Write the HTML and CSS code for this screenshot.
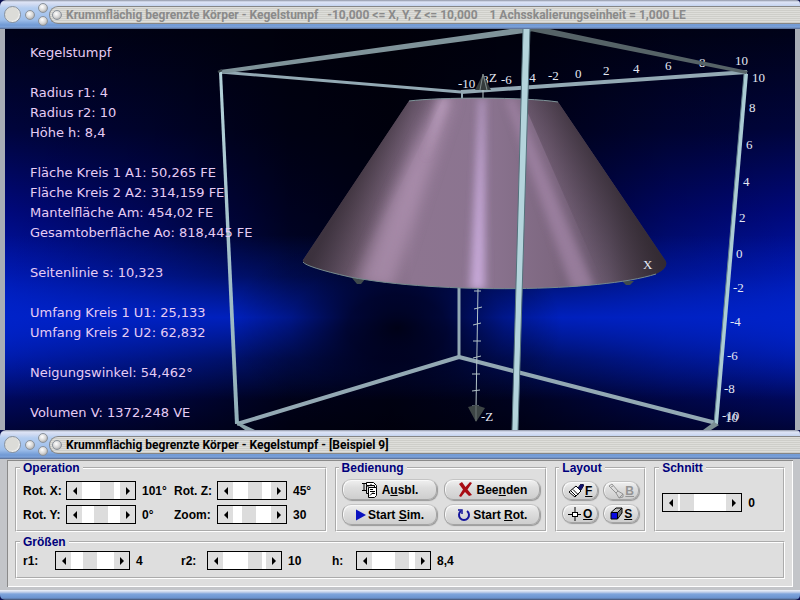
FILE: index.html
```html
<!DOCTYPE html>
<html lang="de">
<head>
  <meta charset="UTF-8">
  <meta name="viewport" content="width=device-width, initial-scale=1.0">
  <title>Krummflächig begrenzte Körper - Kegelstumpf</title>
  <link rel="stylesheet" href="styles.css">
</head>
<body>
  <section class="window">
    <header class="titlebar inactive">
      <button class="ball large" aria-label="Menü"></button>
      <button class="ball" aria-label="Minimieren"></button>
      <div class="ball-stack">
        <button class="ball" aria-label="Maximieren"></button>
        <button class="ball" aria-label="Wiederherstellen"></button>
      </div>
      <div class="caption">
        <button class="ball" aria-label="Schließen"></button>
        <h1>Krummflächig begrenzte Körper - Kegelstumpf   -10,000 &lt;= X, Y, Z &lt;= 10,000    1 Achsskalierungseinheit = 1,000 LE</h1>
      </div>
    </header>

    <div class="scene">
      <svg class="view" viewBox="5 29 790 401">
        <defs>
          <linearGradient id="sky" x1="0" y1="0" x2="0" y2="1">
            <stop offset="0" stop-color="#000218"/>
            <stop offset="0.25" stop-color="#00043c"/>
            <stop offset="0.45" stop-color="#00087a"/>
            <stop offset="0.6" stop-color="#0014a4"/>
            <stop offset="0.72" stop-color="#0024cc"/>
            <stop offset="0.82" stop-color="#0018a0"/>
            <stop offset="0.92" stop-color="#00085c"/>
            <stop offset="1" stop-color="#000438"/>
          </linearGradient>
          <linearGradient id="shade" x1="0" y1="0" x2="1" y2="0">
            <stop offset="0" stop-color="#000008" stop-opacity="0"/>
            <stop offset="0.18" stop-color="#000008" stop-opacity="0.35"/>
            <stop offset="0.36" stop-color="#000008" stop-opacity="0.8"/>
            <stop offset="0.49" stop-color="#000008" stop-opacity="0.92"/>
            <stop offset="0.66" stop-color="#000008" stop-opacity="0.7"/>
            <stop offset="0.84" stop-color="#000008" stop-opacity="0.25"/>
            <stop offset="1" stop-color="#000008" stop-opacity="0"/>
          </linearGradient>
          <linearGradient id="band" x1="0" y1="0" x2="0" y2="1">
            <stop offset="0" stop-color="#0022c8" stop-opacity="0"/>
            <stop offset="0.25" stop-color="#0022c8" stop-opacity="0.3"/>
            <stop offset="0.5" stop-color="#0022c8" stop-opacity="0.9"/>
            <stop offset="0.75" stop-color="#0022c8" stop-opacity="0.3"/>
            <stop offset="1" stop-color="#0022c8" stop-opacity="0"/>
          </linearGradient>
          <radialGradient id="pit">
            <stop offset="0" stop-color="#000010" stop-opacity="0.95"/>
            <stop offset="0.3" stop-color="#000018" stop-opacity="0.8"/>
            <stop offset="0.65" stop-color="#000018" stop-opacity="0.3"/>
            <stop offset="1" stop-color="#000018" stop-opacity="0"/>
          </radialGradient>
          <linearGradient id="cone" gradientUnits="userSpaceOnUse" x1="302" y1="0" x2="668" y2="0">
            <stop offset="0" stop-color="#54475a"/>
            <stop offset="0.14" stop-color="#6e5b6e"/>
            <stop offset="0.3" stop-color="#8d7590"/>
            <stop offset="0.5" stop-color="#8b7490"/>
            <stop offset="0.68" stop-color="#7e6881"/>
            <stop offset="0.84" stop-color="#66566a"/>
            <stop offset="1" stop-color="#40363e"/>
          </linearGradient>
          <linearGradient id="edgeLeft" gradientUnits="userSpaceOnUse" x1="355" y1="180" x2="395" y2="202">
            <stop offset="0" stop-color="#2c242c" stop-opacity="0.65"/>
            <stop offset="1" stop-color="#2c242c" stop-opacity="0"/>
          </linearGradient>
          <linearGradient id="edgeRight" gradientUnits="userSpaceOnUse" x1="612" y1="182" x2="560" y2="214">
            <stop offset="0" stop-color="#2c242c" stop-opacity="0.7"/>
            <stop offset="1" stop-color="#2c242c" stop-opacity="0"/>
          </linearGradient>
          <linearGradient id="rod" x1="0" y1="0" x2="0" y2="1">
            <stop offset="0" stop-color="#b4d2da"/>
            <stop offset="1" stop-color="#93b0ba"/>
          </linearGradient>
          <clipPath id="body">
            <path d="M409 101 C440 97 525 97 558 102 L665 260 Q670 267 656 274 C600 292 440 294 350 277 Q300 266 303 260 Z"/>
          </clipPath>
          <filter id="soft" x="-50%" y="-20%" width="200%" height="140%">
            <feGaussianBlur stdDeviation="7"/>
          </filter>
          <filter id="softer" x="-100%" y="-20%" width="300%" height="140%">
            <feGaussianBlur stdDeviation="4"/>
          </filter>
        </defs>

        <rect x="5" y="29" width="790" height="401" fill="url(#sky)"/>
        <rect x="5" y="29" width="790" height="401" fill="url(#shade)"/>
        <rect x="5" y="235" width="790" height="165" fill="url(#band)"/>
        <ellipse cx="397" cy="328" rx="165" ry="110" fill="url(#pit)"/>

        <!-- axis numbers that lie behind the frame -->
        <g class="axis">
          <text x="482" y="84">8</text>
          <text x="525" y="82">-4</text>
          <text x="699" y="67">8</text>
        </g>

        <!-- back edges of the cube -->
        <g class="frame">
          <path d="M220 72 L461 92" stroke-width="3"/>
          <path d="M461 92 L747 72" stroke-width="4"/>
          <path d="M462 92 V100" stroke-width="2"/>
          <path d="M459 285 V357" stroke-width="3"/>
          <path d="M459 357 L237 424" stroke-width="4"/>
          <path d="M459 357 L716 423" stroke-width="4"/>
        </g>

        <!-- z axis -->
        <g class="zaxis">
          <path d="M483 88 V100"/>
          <path d="M478 288 L476 408 M474 291 h7 M474 309 l8 -2 M473 325 l8 -2 M473 341 h8 M473 358 l8 -2 M472 374 h8 M472 391 l8 -1 M472 406 h7"/>
        </g>
        <path d="M483 74 L475 90 H491 Z" fill="#343b3b"/>
        <path d="M483 74 L480 90 M483 74 L487 90" stroke="#808c8c" stroke-width="1"/>
        <path d="M468 407 L476 405 L485 408 L476 422 Z" fill="#3d4545"/>
        <path d="M476 406 L476 421" stroke="#6a7575" stroke-width="1"/>

        <!-- truncated cone -->
        <path d="M352 278 h14 l-5 6 h-4 Z M622 281 h12 l-4 4 h-4 Z" fill="#3f4a4c"/>
        <g clip-path="url(#body)">
          <rect x="300" y="95" width="370" height="200" fill="url(#cone)"/>
          <path d="M405 95 L300 265 L345 300 L445 95 Z" fill="url(#edgeLeft)"/>
          <path d="M563 95 L675 265 L610 300 L520 95 Z" fill="url(#edgeRight)"/>
          <path d="M440 98 L454 98 L424 190 L392 290 L356 285 L392 200 Z" fill="#b294b4" opacity="0.7" filter="url(#soft)"/>
          <path d="M480 98 L484 98 L485 290 L470 290 Z" fill="#cdafe0" opacity="0.9" filter="url(#softer)"/>
          <path d="M505 98 L514 98 L596 290 L572 290 Z" fill="#a688aa" opacity="0.7" filter="url(#softer)"/>
          <path d="M440 98 L449 98 L425 160 Z" fill="#c4a8c8" opacity="0.7" filter="url(#softer)"/>
        </g>
        <path d="M409 101 C440 97 525 97 558 102" fill="none" stroke="#7d9498" stroke-width="1"/>
        <path d="M303 262 Q306 267 350 277 C440 294 600 292 656 274" fill="none" stroke="#758a8e" stroke-width="1"/>

        <!-- front edges of the cube -->
        <path d="M220 70 L510 29 L540 29 L524 33 L220 74 Z" fill="#7f939a"/>
        <path d="M530 29 L550 29 L748 71 L746 74 L530 31 Z" fill="#566367"/>
        <path d="M219 72 L222 72 L239 424 L235 424 Z" fill="url(#rod)"/>
        <path d="M744 74 L748 74 L718 424 L714 424 Z" fill="#abccd4"/>
        <path d="M744 74 L714 424" stroke="#63808a" stroke-width="1"/>
        <path d="M523 29 L530 29 L518 430 L512 430 Z" fill="#b4d4dc"/>
        <path d="M523 29 L512 430 M530 29 L518 430" stroke="#54717b" stroke-width="1"/>
        <path d="M235 423 L240 423 L255 430 L245 430 Z" fill="#8ba3aa"/>
        <path d="M714 422 L719 425 L711 430 L703 430 Z" fill="#7c8f94"/>
        <path d="M218 72 L222 70" stroke="#3c484c" stroke-width="2"/>

        <g class="axis">
          <text x="458" y="88">-10</text>
          <text x="489" y="82">Z</text>
          <text x="501" y="84">-6</text>
          <text x="548" y="80">-2</text>
          <text x="575" y="78">0</text>
          <text x="603" y="75">2</text>
          <text x="633" y="73">4</text>
          <text x="665" y="70">6</text>
          <text x="735" y="65">10</text>
          <text x="752" y="82">10</text>
          <text x="749" y="112">8</text>
          <text x="746" y="149">6</text>
          <text x="743" y="186">4</text>
          <text x="739" y="222">2</text>
          <text x="736" y="258">0</text>
          <text x="733" y="292">-2</text>
          <text x="730" y="326">-4</text>
          <text x="727" y="360">-6</text>
          <text x="724" y="393">-8</text>
          <text x="722" y="420">-10</text>
          <text x="725" y="422">10</text>
          <text x="481" y="421">-Z</text>
          <text x="643" y="269">X</text>
        </g>
      </svg>

      <div class="readout">
        <p>Kegelstumpf</p>
        <p>Radius r1: 4<br>Radius r2: 10<br>Höhe h: 8,4</p>
        <p>Fläche Kreis 1 A1: 50,265 FE<br>Fläche Kreis 2 A2: 314,159 FE<br>Mantelfläche Am: 454,02 FE<br>Gesamtoberfläche Ao: 818,445 FE</p>
        <p>Seitenlinie s: 10,323</p>
        <p>Umfang Kreis 1 U1: 25,133<br>Umfang Kreis 2 U2: 62,832</p>
        <p>Neigungswinkel: 54,462°</p>
        <p>Volumen V: 1372,248 VE</p>
      </div>
    </div>
  </section>

  <section class="window">
    <header class="titlebar">
      <button class="ball large" aria-label="Menü"></button>
      <button class="ball" aria-label="Minimieren"></button>
      <div class="ball-stack">
        <button class="ball" aria-label="Maximieren"></button>
        <button class="ball" aria-label="Wiederherstellen"></button>
      </div>
      <div class="caption">
        <button class="ball" aria-label="Schließen"></button>
        <h2>Krummflächig begrenzte Körper - Kegelstumpf - [Beispiel 9]</h2>
      </div>
    </header>

    <form class="panel">
      <fieldset class="operation">
        <legend>Operation</legend>
        <label for="rotx">Rot. X:</label>
        <div class="scroll">
          <button type="button" class="prev" aria-label="weniger"></button>
          <input type="range" id="rotx" min="-180" max="180" value="101">
          <button type="button" class="next" aria-label="mehr"></button>
        </div>
        <output for="rotx">101°</output>
        <label for="rotz">Rot. Z:</label>
        <div class="scroll">
          <button type="button" class="prev" aria-label="weniger"></button>
          <input type="range" id="rotz" min="-180" max="180" value="45">
          <button type="button" class="next" aria-label="mehr"></button>
        </div>
        <output for="rotz">45°</output>
        <label for="roty">Rot. Y:</label>
        <div class="scroll">
          <button type="button" class="prev" aria-label="weniger"></button>
          <input type="range" id="roty" min="-180" max="180" value="0">
          <button type="button" class="next" aria-label="mehr"></button>
        </div>
        <output for="roty">0°</output>
        <label for="zoom">Zoom:</label>
        <div class="scroll">
          <button type="button" class="prev" aria-label="weniger"></button>
          <input type="range" id="zoom" min="0" max="90" value="30">
          <button type="button" class="next" aria-label="mehr"></button>
        </div>
        <output for="zoom">30</output>
      </fieldset>

      <fieldset class="actions">
        <legend>Bedienung</legend>
        <button type="button" class="pill">
          <svg width="17" height="17" viewBox="0 0 17 17" fill="none" stroke="#000">
            <path d="M1 2.500h4M1 9.500h4M3 2.500v7"/>
            <path d="M5.500 1.500h7l3 3v2h-2v-2h-8z" fill="#fff"/>
            <path d="M5.500 4.500v8h2"/>
            <path d="M7.500 6.500h8v8l-2 2h-6z" fill="#fff"/>
            <path d="M9 8.500h3M9 10.500h5M11 12.500h3M9 14.500l3-3M7 4v2M10 3v2"/>
          </svg>
          <span>A<u>u</u>sbl.</span>
        </button>
        <button type="button" class="pill">
          <svg width="15" height="15" viewBox="0 0 15 15">
            <path d="M1 2 L4 0 L7.500 5 L12 0 L14 1 L9.500 7.500 L14 13 L11 14 L7 10 L3 15 L1 14 L5 7.500 Z" fill="#a80c14"/>
          </svg>
          <span>Bee<u>n</u>den</span>
        </button>
        <button type="button" class="pill tight">
          <svg width="11" height="12" viewBox="0 0 11 12">
            <path d="M1 0.500 L11 6 L1 11.500 Z" fill="#0a12c0"/>
          </svg>
          <span>Start <u>S</u>im.</span>
        </button>
        <button type="button" class="pill tight">
          <svg width="14" height="14" viewBox="0 0 14 14" fill="none" stroke="#14149c" stroke-width="2">
            <path d="M4 3 A5 5 0 1 0 10 3"/>
            <path d="M1 2h4v4" stroke-width="1.500"/>
          </svg>
          <span>Start <u>R</u>ot.</span>
        </button>
      </fieldset>

      <fieldset class="layout">
        <legend>Layout</legend>
        <button type="button" class="pill small">
          <svg width="16" height="14" viewBox="0 0 16 14" fill="none" stroke="#000">
            <path d="M8 2 L13 7 L7 13 L1 8 Z" fill="#fff"/>
            <path d="M3 7l5 5M5 5.500l5 5"/>
            <path d="M10 4l3 2 3-5-3-1z" fill="#101070" stroke="#101040"/>
          </svg>
          <u>F</u>
        </button>
        <button type="button" class="pill small" disabled>
          <svg width="16" height="16" viewBox="0 0 16 16" fill="none" stroke="#949494">
            <path d="M1 3l3-2 6 7-2 2z"/>
            <path d="M10 8l5 3v3l-4 1-3-5z"/>
            <path d="M3 4l2-1M11 15l4-4"/>
          </svg>
          <u>B</u>
        </button>
        <button type="button" class="pill small">
          <svg width="14" height="14" viewBox="0 0 14 14" fill="none" stroke="#000">
            <path d="M0 7.500h5M9 7.500h4M7 0v5M7 10v4"/>
            <rect x="4.500" y="5.500" width="5" height="4" fill="#fff"/>
          </svg>
          <u>O</u>
        </button>
        <button type="button" class="pill small">
          <svg width="13" height="13" viewBox="0 0 13 13" stroke="#000">
            <path d="M1 5.500 L6 1 H12 L7.500 5.500 Z" fill="#bbb"/>
            <path d="M7.500 5.500 L12 1 V6 L7.500 12 Z" fill="#777"/>
            <path d="M1 5.500 h6.500 v6.500 h-6.500 Z" fill="#0a0ae0"/>
          </svg>
          <u>S</u>
        </button>
      </fieldset>

      <fieldset class="cut">
        <legend>Schnitt</legend>
        <div class="scroll">
          <button type="button" class="prev" aria-label="weniger"></button>
          <input type="range" id="cut" min="0" max="10" value="0" aria-label="Schnitt">
          <button type="button" class="next" aria-label="mehr"></button>
        </div>
        <output for="cut">0</output>
      </fieldset>

      <fieldset class="sizes">
        <legend>Größen</legend>
        <label for="r1">r1:</label>
        <div class="scroll">
          <button type="button" class="prev" aria-label="weniger"></button>
          <input type="range" id="r1" min="0" max="10" value="4">
          <button type="button" class="next" aria-label="mehr"></button>
        </div>
        <output for="r1">4</output>
        <label for="r2">r2:</label>
        <div class="scroll">
          <button type="button" class="prev" aria-label="weniger"></button>
          <input type="range" id="r2" min="0" max="11" value="10">
          <button type="button" class="next" aria-label="mehr"></button>
        </div>
        <output for="r2">10</output>
        <label for="h">h:</label>
        <div class="scroll">
          <button type="button" class="prev" aria-label="weniger"></button>
          <input type="range" id="h" min="0" max="10" step="0.1" value="8.4">
          <button type="button" class="next" aria-label="mehr"></button>
        </div>
        <output for="h">8,4</output>
      </fieldset>
    </form>
    <div class="bottom-edge"></div>
  </section>
</body>
</html>
```

FILE: styles.css
```css
* {
  box-sizing: border-box;
}
body {
  margin: 0;
  background: #0a1050;
  font-family: "Liberation Sans", Arial, sans-serif;
  font-size: 12px;
  font-weight: bold;
  color: #000;
}
button {
  font: inherit;
  color: inherit;
  padding: 0;
  border: none;
  background: none;
}

/* title bars */
.titlebar {
  display: flex;
  align-items: center;
  gap: 4px;
  height: 29px;
  padding-left: 4px;
  border-radius: 6px 4px 0 0;
  background: linear-gradient(#8e94a4 0, #dde4f6 2px, #d3dcf2 4px, #b4cdf0 8px, #9cbdea 20px, #7099d4 25px, #7ba2da 27px, #56688c 29px);
}
.ball {
  width: 10px;
  height: 10px;
  flex: none;
  border-radius: 50%;
  border: 1px solid #8a929c;
  background: radial-gradient(circle at 40% 35%, #fff, #d6d6d6 50%, #8f8f8f);
}
.ball.large {
  width: 17px;
  height: 17px;
  background: radial-gradient(circle at 45% 45%, #dcdcd8 55%, #f4f4f4 70%, #a0a0a0);
}
.ball-stack {
  display: flex;
  flex-direction: column;
  gap: 3px;
  margin-left: -1px;
}
.caption {
  flex: 1;
  min-width: 0;
  display: flex;
  align-items: center;
  gap: 4px;
  height: 18px;
  margin-left: -3px;
  padding-left: 2px;
  overflow: hidden;
  border: 1px solid #868686;
  border-right: none;
  border-radius: 9px 0 0 9px;
  background: repeating-linear-gradient(#dededa 0, #dededa 1px, #cecec9 1px, #cecec9 2px);
}
.caption h1,
.caption h2 {
  margin: 0;
  font-family: Roboto, "Liberation Sans", sans-serif;
  font-size: 12px;
  line-height: 16px;
  white-space: pre;
}
.inactive h1 {
  color: #8a8a8a;
}

/* 3d view with the values written over it */
.scene {
  display: grid;
  border: solid #a9adb6;
  border-width: 0 5px;
}
.view {
  grid-area: 1 / 1;
  display: block;
  width: 100%;
  height: auto;
}
.frame path {
  fill: none;
  stroke: #93a9b4;
}
.zaxis path {
  fill: none;
  stroke: #b4c4c8;
}
.axis text {
  fill: #e4e8f4;
  font: 13px "Liberation Serif", "Times New Roman", serif;
}
.readout {
  grid-area: 1 / 1;
  padding: 14px 25px 0;
  font-family: "DejaVu Sans", sans-serif;
  font-size: 13px;
  font-weight: normal;
  line-height: 20px;
  color: #e6ccf4;
}
.readout p {
  margin: 0 0 20px;
}
.readout p:last-child {
  margin: 0;
}

/* control panel */
.panel {
  display: grid;
  grid-template-columns: 312fr 213fr 91fr 131fr;
  gap: 3px 8px;
  margin: 0;
  padding: 1px 8px 8px;
  border: solid #c3c5c9;
  border-width: 1px 7px 3px;
  background: #dedede;
  box-shadow: inset 1px 1px #8a8a8a, inset -1px -1px #fff;
}
fieldset {
  min-width: 0;
  margin: 0;
  padding: 6px;
  border: 2px groove #fff;
}
legend {
  margin-left: -3px;
  padding: 0 3px;
  line-height: 14px;
  color: #00007c;
}
.operation {
  display: grid;
  grid-template-columns: 43px 70px 38px 43px 70px auto;
  row-gap: 5px;
  align-items: center;
}
.actions {
  display: grid;
  grid-template-columns: 1fr 1fr;
  gap: 3px 7px;
  padding: 4px 5px;
}
.layout {
  display: grid;
  grid-template-columns: 1fr 1fr;
  gap: 3px 5px;
  padding: 6px 5px;
}
.cut {
  display: grid;
  grid-template-columns: 80px auto;
  align-items: center;
}
.sizes {
  grid-column: 1 / -1;
  display: grid;
  grid-template-columns: 32px 75px 51px 26px 75px 50px 24px 75px auto;
  align-items: center;
  padding: 2px 6px 7px;
}
output {
  padding-left: 6px;
}

/* scroll bars */
.scroll {
  display: flex;
  height: 19px;
  border: 1px solid #000;
  background: #fff;
}
.scroll button {
  display: flex;
  align-items: center;
  justify-content: center;
  width: 15px;
  flex: none;
  background: #dedede;
}
.scroll button::before {
  content: "";
  border: 4px solid transparent;
}
.scroll .prev::before {
  border-left-width: 0;
  border-right-color: #000;
}
.scroll .next::before {
  border-right-width: 0;
  border-left-color: #000;
}
.scroll input {
  flex: 1;
  width: 0;
  min-width: 0;
  height: 17px;
  margin: 0 2px;
  appearance: none;
  background: #fff;
}
.scroll input::-webkit-slider-thumb {
  appearance: none;
  width: 14px;
  height: 17px;
  background: #dcdcdc;
}

/* push buttons */
.pill {
  display: flex;
  align-items: center;
  justify-content: center;
  gap: 4px;
  height: 21px;
  border: 1px solid #a4a4a4;
  border-top-color: #c4c4c4;
  border-radius: 9px;
  background: linear-gradient(#f0f0f0, #dedede 40%, #cecece);
  box-shadow: inset 1px 1px #f8f8f8, 1px 1px 1px #999;
}
.pill.tight {
  gap: 2px;
}
.pill.small {
  gap: 1px;
  height: 19px;
}
.pill:disabled {
  color: #949494;
}

.bottom-edge {
  height: 10px;
  border-radius: 0 0 5px 5px;
  background: linear-gradient(#eef2fa 0, #c6d2ea 2px, #7ea4dc 4px, #6b93cf 8px, #44506c 10px);
}
```
